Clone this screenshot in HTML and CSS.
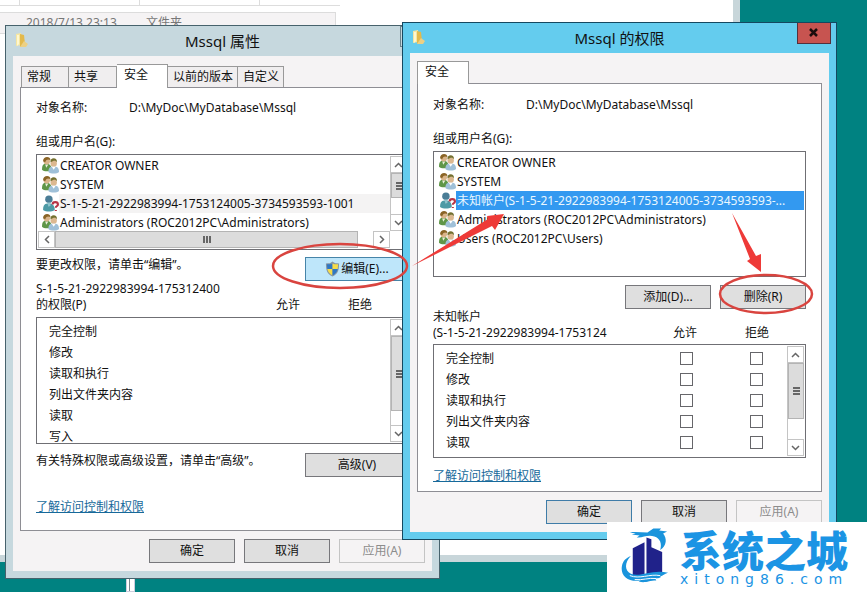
FILE: index.html
```
<!DOCTYPE html>
<html lang="zh-CN">
<head>
    <meta charset="UTF-8">
    <meta name="viewport" content="width=device-width, initial-scale=1.0">
    <title>Mssql 属性</title>
    <link rel="stylesheet" href="styles.css">
</head>
<body>
    <!-- icons -->
    <svg class="defs" width="0" height="0">
        <symbol id="i-folder" viewBox="0 0 14 16">
            <path d="M1 2l5-1v12l-5 1z" fill="#f6e6a0"/>
            <path d="M5 2l4 1 1 9-5 3z" fill="#e3b94b"/>
            <path d="M2 3l2 0v9l-2 2z" fill="#fff7cf"/>
            <path d="M9 9l4 3-2 3-6 0z" fill="#ecd084"/>
        </symbol>
        <symbol id="i-group" viewBox="0 0 16 16">
            <path d="M0 12c0-4 1-6 4-6s5 2 5 6c-2 2-7 2-9 0z" fill="#5f9648"/>
            <path d="M3 7l1 3 2-3z" fill="#e8efdc"/>
            <circle cx="4.500" cy="4" r="3" fill="#d9b48a"/>
            <path d="M1 4c0-5 7-5 7-1-2-1-4-1-5 2z" fill="#8a6426"/>
            <path d="M6 14c0-4 2-5 5-5s5 1 5 5c-2 2-8 2-10 0z" fill="#9fc0d8"/>
            <path d="M9 9l2 3 2-3z" fill="#fff"/>
            <circle cx="11" cy="6" r="3" fill="#dcb890"/>
            <path d="M8 5c-1-5 7-5 6 0-1-2-3-2-6 0z" fill="#74702f"/>
        </symbol>
        <symbol id="i-unknown" viewBox="0 0 16 16">
            <path d="M1 14c0-5 2-6 5-6s6 1 6 6c-3 2-8 2-11 0z" fill="#4d9aa5"/>
            <circle cx="6.500" cy="4" r="3.500" fill="#4b7d96"/>
            <path d="M5 7h3v3l-2 1z" fill="#8fc3cc"/>
            <path d="M10 9c0-3 5-3 5 0 0 2-2 1-2 3M13 14v1" class="mark"/>
        </symbol>
        <symbol id="i-shield" viewBox="0 0 16 16">
            <path d="M8 0c2 2 4 2 7 2 0 7-1 11-7 14C2 13 1 9 1 2c3 0 5 0 7-2z" fill="#8695a3"/>
            <path d="M8 2v6H2.500L2 3c3 0 4 0 6-1z" fill="#2f78c4"/>
            <path d="M8 2c2 1 3 1 6 1l-.5 5H8z" fill="#f5dc4a"/>
            <path d="M2.500 8H8v7c-3-2-5-4-5.500-7z" fill="#f5dc4a"/>
            <path d="M8 8h5.500c-.5 3-2.500 5-5.500 7z" fill="#2f78c4"/>
        </symbol>
        <symbol id="i-up" viewBox="0 0 9 6"><path d="M1 5l3.500-3.500L8 5" class="chev"/></symbol>
        <symbol id="i-down" viewBox="0 0 9 6"><path d="M1 1l3.500 3.500L8 1" class="chev"/></symbol>
        <symbol id="i-left" viewBox="0 0 6 9"><path d="M5 1L1.500 4.500 5 8" class="chev"/></symbol>
        <symbol id="i-right" viewBox="0 0 6 9"><path d="M1 1l3.500 3.500L1 8" class="chev"/></symbol>
    </svg>

    <main class="desktop">
        <section class="explorer">
            <div class="columns"><span></span><span></span><span></span></div>
            <div class="file-row"><span>2018/7/13 23:13</span><span>文件夹</span></div>
        </section>
        <div class="handle"></div>

        <section class="window properties">
            <header class="titlebar">
                <svg class="folder"><use href="#i-folder"/></svg>
                <h1>Mssql 属性</h1>
                <button class="close" aria-label="关闭"></button>
            </header>
            <div class="client">
                <nav class="tabs">
                    <button class="tab">常规</button>
                    <button class="tab">共享</button>
                    <button class="tab active">安全</button>
                    <button class="tab">以前的版本</button>
                    <button class="tab">自定义</button>
                </nav>
                <div class="panel">
                    <div class="object"><span>对象名称:</span><span>D:\MyDoc\MyDatabase\Mssql</span></div>
                    <p class="caption">组或用户名(G):</p>
                    <div class="listbox users">
                        <div class="list-main">
                            <ul>
                                <li><svg><use href="#i-group"/></svg><span>CREATOR OWNER</span></li>
                                <li><svg><use href="#i-group"/></svg><span>SYSTEM</span></li>
                                <li class="current"><svg><use href="#i-unknown"/></svg><span>S-1-5-21-2922983994-1753124005-3734593593-1001</span></li>
                                <li><svg><use href="#i-group"/></svg><span>Administrators (ROC2012PC\Administrators)</span></li>
                            </ul>
                            <div class="vscroll">
                                <button aria-label="上"><svg class="v"><use href="#i-up"/></svg></button>
                                <div class="thumb short"><i></i></div>
                                <button aria-label="下"><svg class="v"><use href="#i-down"/></svg></button>
                            </div>
                        </div>
                        <div class="hscroll">
                            <button aria-label="左"><svg class="h"><use href="#i-left"/></svg></button>
                            <div class="thumb"><i></i></div>
                            <button aria-label="右"><svg class="h"><use href="#i-right"/></svg></button>
                        </div>
                    </div>
                    <div class="action">
                        <p>要更改权限，请单击“编辑”。</p>
                        <button class="btn wide edit"><svg><use href="#i-shield"/></svg>编辑(E)...</button>
                    </div>
                    <div class="perm-head">
                        <p><span>S-1-5-21-2922983994-1753124005</span><br>的权限(P)</p>
                        <span>允许</span><span>拒绝</span>
                    </div>
                    <div class="listbox perms">
                        <table>
                            <tr><td>完全控制</td></tr>
                            <tr><td>修改</td></tr>
                            <tr><td>读取和执行</td></tr>
                            <tr><td>列出文件夹内容</td></tr>
                            <tr><td>读取</td></tr>
                            <tr><td>写入</td></tr>
                        </table>
                        <div class="vscroll">
                            <button aria-label="上"><svg class="v"><use href="#i-up"/></svg></button>
                            <div class="thumb long"><i></i></div>
                            <button aria-label="下"><svg class="v"><use href="#i-down"/></svg></button>
                        </div>
                    </div>
                    <div class="action advanced">
                        <p>有关特殊权限或高级设置，请单击“高级”。</p>
                        <button class="btn wide">高级(V)</button>
                    </div>
                    <a href="#">了解访问控制和权限</a>
                </div>
                <footer class="buttons">
                    <button class="btn">确定</button>
                    <button class="btn">取消</button>
                    <button class="btn" disabled>应用(A)</button>
                </footer>
            </div>
        </section>

        <section class="window permissions">
            <header class="titlebar">
                <svg class="folder"><use href="#i-folder"/></svg>
                <h1>Mssql 的权限</h1>
                <button class="close" aria-label="关闭"><svg viewBox="0 0 10 9"><path d="M1 1l7 7M8 1L1 8" stroke="#1b0d0d" stroke-width="2.500"/></svg></button>
            </header>
            <div class="client">
                <nav class="tabs">
                    <button class="tab active">安全</button>
                </nav>
                <div class="panel">
                    <div class="object"><span>对象名称:</span><span>D:\MyDoc\MyDatabase\Mssql</span></div>
                    <p class="caption">组或用户名(G):</p>
                    <div class="listbox users">
                        <ul>
                            <li><svg><use href="#i-group"/></svg><span>CREATOR OWNER</span></li>
                            <li><svg><use href="#i-group"/></svg><span>SYSTEM</span></li>
                            <li class="selected"><svg><use href="#i-unknown"/></svg><span>未知帐户(S-1-5-21-2922983994-1753124005-3734593593-...</span></li>
                            <li><svg><use href="#i-group"/></svg><span>Administrators (ROC2012PC\Administrators)</span></li>
                            <li><svg><use href="#i-group"/></svg><span>Users (ROC2012PC\Users)</span></li>
                        </ul>
                    </div>
                    <div class="edit-buttons">
                        <button class="btn">添加(D)...</button>
                        <button class="btn">删除(R)</button>
                    </div>
                    <div class="perm-head">
                        <p>未知帐户<br><span>(S-1-5-21-2922983994-1753124</span></p>
                        <span>允许</span><span>拒绝</span>
                    </div>
                    <div class="listbox perms">
                        <table>
                            <tr><td>完全控制</td><td><input type="checkbox" aria-label="完全控制 允许"></td><td><input type="checkbox" aria-label="完全控制 拒绝"></td></tr>
                            <tr><td>修改</td><td><input type="checkbox" aria-label="修改 允许"></td><td><input type="checkbox" aria-label="修改 拒绝"></td></tr>
                            <tr><td>读取和执行</td><td><input type="checkbox" aria-label="读取和执行 允许"></td><td><input type="checkbox" aria-label="读取和执行 拒绝"></td></tr>
                            <tr><td>列出文件夹内容</td><td><input type="checkbox" aria-label="列出文件夹内容 允许"></td><td><input type="checkbox" aria-label="列出文件夹内容 拒绝"></td></tr>
                            <tr><td>读取</td><td><input type="checkbox" aria-label="读取 允许"></td><td><input type="checkbox" aria-label="读取 拒绝"></td></tr>
                        </table>
                        <div class="vscroll">
                            <button aria-label="上"><svg class="v"><use href="#i-up"/></svg></button>
                            <div class="thumb"><i></i></div>
                            <button aria-label="下"><svg class="v"><use href="#i-down"/></svg></button>
                        </div>
                    </div>
                    <a href="#">了解访问控制和权限</a>
                </div>
                <footer class="buttons">
                    <button class="btn default">确定</button>
                    <button class="btn">取消</button>
                    <button class="btn" disabled>应用(A)</button>
                </footer>
            </div>
        </section>

        <!-- red marks over both windows -->
        <svg class="marks" width="867" height="592">
            <ellipse cx="340" cy="266" rx="67" ry="22"/>
            <ellipse cx="766" cy="294" rx="46" ry="19"/>
            <path d="M412 266L488 219l-1-3 17-2-9 16-3-4z"/>
            <path d="M732 213l24 43 5-2v18l-14-11 3-2z"/>
        </svg>

        <div class="brand">
            <svg viewBox="0 0 50 58">
                <path d="M12 21l12-6v33l-12 2z" fill="#20228a"/>
                <path d="M26 10l5 2v8l11 5v23l-16 2z" fill="#20228a"/>
                <path d="M9 5c5-1 12 0 18 0l6-4 8 0-2 2 8 1-4 2c4 5 4 12-3 17 2-7 0-12-6-14-8-2-12 2-18 1l3-2-8-1 4-1z" fill="#1a94dc"/>
                <path d="M10 29C4 35 3 44 10 47c10 4 22-5 38-1-4 1-5 3-8 4 2 1-2 2-5 2l1 2c-8 0-11 3-18 1l2-1C7 56-1 49 1 39c1-5 4-8 9-10z" fill="#1a94dc"/>
                <path d="M9 49c10 4 20-2 31 0M14 53c8 1 14-2 22-1" stroke="#fff" fill="none"/>
            </svg>
            <div class="brand-text"><strong>系统之城</strong><span>xitong86.com</span></div>
        </div>
    </main>
</body>
</html>
```
FILE: styles.css
```
* { box-sizing: border-box; }
body {
    margin: 0;
    font: 12px/16px "Noto Sans", "Noto Sans CJK SC", sans-serif;
    color: #111;
}
p, h1, ul { margin: 0; padding: 0; }
ul { list-style: none; }
button { font: inherit; color: inherit; padding: 0; }
.defs { position: absolute; }
.desktop {
    position: relative;
    min-height: 100vh;
    background: #008281;
    overflow: hidden;
}

/* file manager behind the dialogs */
.explorer {
    position: absolute;
    inset: 0 127px 30px 0;
    background: #fff;
    border: solid #c8d6da;
    border-width: 0 7px 7px 0;
}
.columns {
    display: flex;
    width: 340px;
    height: 6px;
    padding-left: 19px;
    border-bottom: 1px solid #ddd;
    overflow: hidden;
}
.columns span { flex: none; width: 120px; border-left: 1px solid #ddd; }
.file-row {
    display: flex;
    width: 336px;
    height: 22px;
    margin-top: 6px;
    padding: 2px 0 0 26px;
    background: #f5f3f4;
    border: 1px solid #dcdcdc;
    border-left: 0;
    color: #777;
}
.file-row span { width: 120px; }
.handle {
    position: absolute;
    left: 126px;
    bottom: 0;
    width: 9px;
    height: 16px;
    background: #fff;
    border: 1px solid #ccd;
    border-top: 0;
    box-shadow: inset 2px 0 #fff, inset 3px 0 #78868c;
}

/* dialogs */
.window {
    position: absolute;
    width: 435px;
    padding: 0 7px 7px;
    border: 1px solid #47626c;
    background: #c6d8de;
}
.properties { left: 5px; top: 25px; }
.permissions {
    left: 402px;
    top: 22px;
    background: #64ccee;
    border-color: #154860;
}
.titlebar {
    display: grid;
    grid-template-columns: 1fr auto 1fr;
    height: 30px;
}
.titlebar h1 { font-size: 15px; line-height: 30px; font-weight: normal; }
.folder { width: 14px; height: 16px; margin: 6px 0 0 2px; }
.close {
    justify-self: end;
    width: 34px;
    height: 21px;
    margin-right: -2px;
    border: 1px solid #6b838c;
    background: transparent;
}
.permissions .close { background: #c75450; border-color: #54303c; border-top: 0; }
.close svg { width: 10px; height: 9px; }
.client { padding: 8px 7px; background: #f5f3f4; }
.tabs { display: flex; align-items: flex-end; height: 24px; padding-left: 1px; }
.tab {
    height: 21px;
    margin-bottom: 1px;
    padding: 0 5px;
    border: 1px solid #999;
    border-width: 1px 1px 0;
    background: #f0eeef;
    text-align: left;
}
.tab + .tab { border-left: 0; padding-right: 4px; }
.tab:first-child, .tab:nth-child(2) { width: 48px; }
.tab.active {
    position: relative;
    z-index: 1;
    width: 51px;
    height: 24px;
    margin-bottom: 0;
    padding: 0 7px 3px;
    background: #fff;
}
.permissions .tabs { padding-left: 0; }
.permissions .tabs, .permissions .tab.active { height: 23px; }
.permissions .tab.active { width: 52px; }
.panel {
    margin-top: -1px;
    padding: 12px 15px 15px;
    border: 1px solid #8e8e94;
    background: #fff;
}
.permissions .panel { padding: 13px 15px 7px; }
.object { display: flex; margin-bottom: 18px; }
.object span:first-child { width: 93px; }
.caption { margin-bottom: 4px; }
.listbox { border: 1px solid #6f6f74; padding: 1px; background: #fff; }
.users { height: 126px; }
.properties .users { height: 96px; }
.list-main { display: flex; height: 75px; overflow: hidden; }
.users ul { flex: 1; min-width: 0; }
.users li {
    display: flex;
    align-items: center;
    height: 19px;
    padding-left: 4px;
    white-space: nowrap;
}
.users li svg { flex: none; width: 17px; height: 17px; }
.users li span { flex: 1; padding-left: 1px; line-height: 19px; }
.current span { background: #f4f3f3; }
.selected span { background: #3399f0; color: #e9f7ff; }
.mark { fill: none; stroke: #b73445; stroke-width: 2; }
.selected .mark { stroke: #3b5580; }

/* scroll bars */
.vscroll {
    display: flex;
    flex-direction: column;
    flex: none;
    width: 17px;
    border-left: 1px solid #c4c4c4;
}
.vscroll button, .hscroll button {
    display: grid;
    place-items: center;
    flex: none;
    width: 17px;
    height: 17px;
    border: 1px solid #c4c4c4;
    background: #fff;
}
.vscroll button { width: 16px; border-left: 0; }
.vscroll button:last-child { margin-top: auto; }
.v { width: 9px; height: 6px; }
.h { width: 6px; height: 9px; }
.chev { fill: none; stroke: #666; stroke-width: 1.5; }
.thumb {
    display: grid;
    place-items: center;
    height: 56px;
    background: #dcdcdc;
    border: 1px solid #b4b4b4;
}
.thumb.short { height: 25px; }
.thumb.long { height: 75px; }
.thumb i {
    width: 7px;
    height: 8px;
    background: repeating-linear-gradient(#666 0 2px, transparent 2px 3px);
}
.hscroll { display: flex; width: 352px; }
.hscroll .thumb { flex: 1; height: 17px; margin-right: 15px; }
.hscroll .thumb i {
    width: 8px;
    height: 7px;
    background: repeating-linear-gradient(90deg, #666 0 2px, transparent 2px 3px);
}

/* rows below the user list */
.action { display: flex; justify-content: space-between; margin-top: 7px; }
.btn {
    width: 86px;
    height: 24px;
    border: 1px solid #77777b;
    background: #dfdfdf;
}
.btn.wide { width: 104px; }
.btn.edit {
    display: flex;
    align-items: center;
    justify-content: center;
    gap: 1px;
    background: #bee6fa;
    border-color: #4684a8;
}
.edit svg { width: 15px; height: 16px; }
.btn.default { border-color: #3f7ca8; }
.btn:disabled { background: #f5f3f4; border-color: #c4c4c4; color: #8c8c8c; }
.edit-buttons { display: flex; justify-content: flex-end; gap: 9px; margin-top: 8px; }
.perm-head { display: flex; align-items: flex-end; margin-bottom: 3px; }
.properties .perm-head { margin-bottom: 4px; }
.perm-head p { width: 216px; white-space: nowrap; }
.perm-head p span { display: inline-block; width: 184px; overflow: hidden; vertical-align: top; }
.perm-head > span { width: 72px; text-align: center; }
.perms { display: flex; height: 114px; overflow: hidden; }
.properties .perms { height: 127px; }
.perms table {
    flex: 1;
    align-self: flex-start;
    border-spacing: 0;
    margin-top: 2px;
    table-layout: fixed;
}
.perms td { height: 21px; padding: 0; }
.perms td:first-child { padding-left: 11px; }
.perms td + td { width: 78px; text-align: center; }
.perms td:nth-child(3) { width: 62px; }
.perms input {
    appearance: none;
    display: block;
    width: 13px;
    height: 13px;
    margin: 0 auto;
    border: 1px solid #66666a;
    background: #fff;
}
.properties .advanced { margin-top: 9px; }
.panel a { display: inline-block; color: #17699a; margin-top: 10px; }
.properties .panel a { margin-top: 22px; }
.buttons { display: flex; justify-content: flex-end; gap: 9px; margin-top: 8px; }

/* hand-drawn ellipses and arrows */
.marks { position: absolute; left: 0; top: 0; pointer-events: none; }
.marks ellipse { fill: none; stroke: #d9443f; stroke-width: 2.5; }
.marks path { fill: #ee3a38; }

.brand {
    position: absolute;
    right: 0;
    bottom: 0;
    display: flex;
    gap: 10px;
    width: 260px;
    height: 70px;
    padding: 5px 14px;
    background: #fff;
    color: #1b94e4;
}
.brand svg { width: 49px; height: 58px; }
.brand-text { display: flex; flex-direction: column; }
.brand strong { font: 900 42px/44px "Noto Sans CJK SC", sans-serif; }
.brand-text span { font: 14px/16px "DejaVu Sans", sans-serif; letter-spacing: 6px; }
```
